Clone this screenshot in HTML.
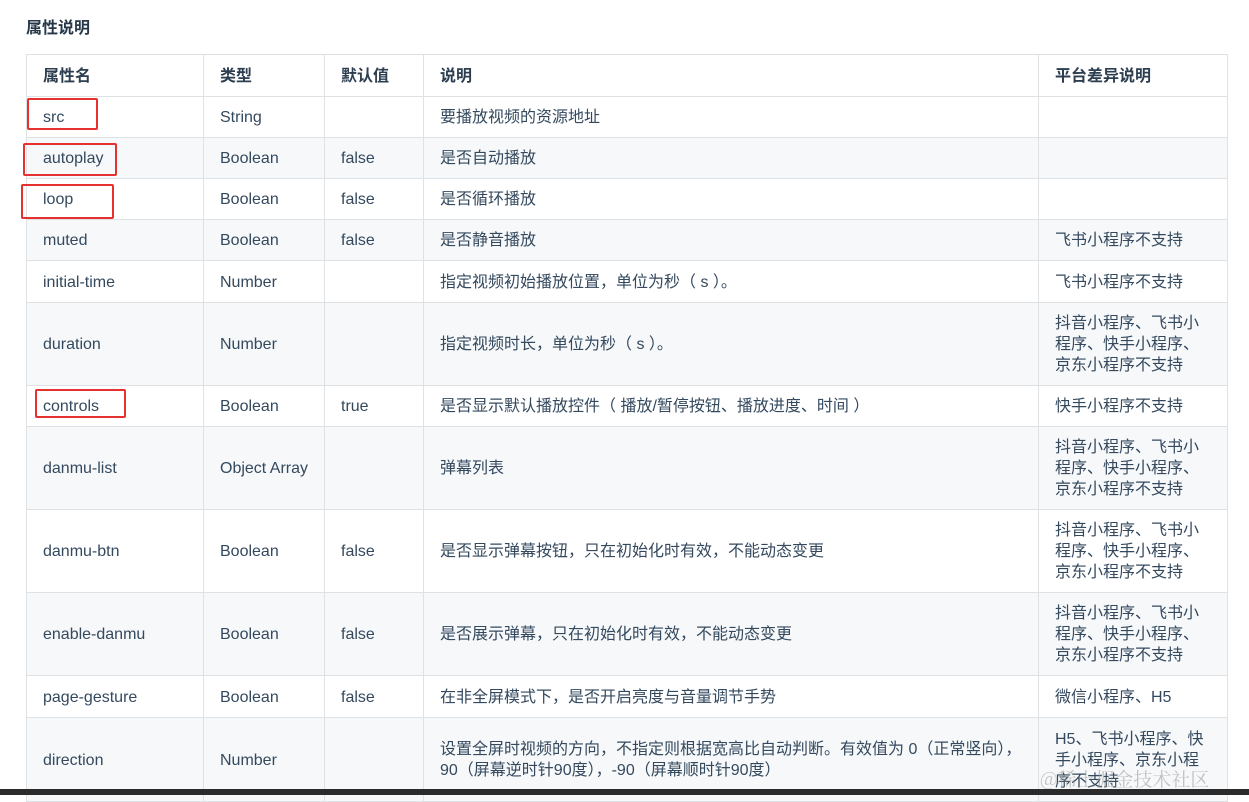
<!DOCTYPE html>
<html><head><meta charset="utf-8"><style>
body{margin:0;width:1249px;height:795px;overflow:hidden;background:#fff;font-family:"Liberation Sans","Noto Sans CJK SC",sans-serif;color:#2c3e50;position:relative}
h3{position:absolute;left:26px;top:14px;margin:0;font-size:16px;font-weight:bold;color:#273849}
table{position:absolute;left:26px;top:54px;width:1201px;border-collapse:collapse;font-size:16px;table-layout:fixed}
td,th{border:1px solid #dfe2e5;padding:1px 16px 0 16px;line-height:21px;text-align:left;vertical-align:middle;color:#34495e}
th{font-weight:bold;color:#2c3e50}
tr:nth-child(odd) td{background:#f6f8fa}
.nw{white-space:nowrap}
.r{position:absolute;border:2px solid #e5312f;border-radius:2px}
.bar{position:absolute;left:0;top:789px;width:1249px;height:6px;background:#2b2b2b}
.wm{position:absolute;left:1040px;top:765px;font-size:19px;color:rgba(150,150,150,.55);font-family:"Noto Serif CJK SC",serif}
</style></head><body>
<h3>属性说明</h3>
<table>
<colgroup><col style="width:177px"><col style="width:121px"><col style="width:99px"><col style="width:615px"><col style="width:189px"></colgroup>
<tr style="height:42px"><th>属性名</th><th>类型</th><th>默认值</th><th>说明</th><th>平台差异说明</th></tr>
<tr style="height:41px"><td>src</td><td>String</td><td></td><td>要播放视频的资源地址</td><td></td></tr>
<tr style="height:41px"><td>autoplay</td><td>Boolean</td><td>false</td><td>是否自动播放</td><td></td></tr>
<tr style="height:41px"><td>loop</td><td>Boolean</td><td>false</td><td>是否循环播放</td><td></td></tr>
<tr style="height:41px"><td>muted</td><td>Boolean</td><td>false</td><td>是否静音播放</td><td>飞书小程序不支持</td></tr>
<tr style="height:42px"><td>initial-time</td><td>Number</td><td></td><td>指定视频初始播放位置，单位为秒（ s ）。</td><td>飞书小程序不支持</td></tr>
<tr style="height:83px"><td>duration</td><td>Number</td><td></td><td>指定视频时长，单位为秒（ s ）。</td><td>抖音小程序、飞书小程序、快手小程序、京东小程序不支持</td></tr>
<tr style="height:41px"><td>controls</td><td>Boolean</td><td>true</td><td>是否显示默认播放控件（ 播放/暂停按钮、播放进度、时间 ）</td><td>快手小程序不支持</td></tr>
<tr style="height:83px"><td>danmu-list</td><td class="nw">Object Array</td><td></td><td>弹幕列表</td><td>抖音小程序、飞书小程序、快手小程序、京东小程序不支持</td></tr>
<tr style="height:83px"><td>danmu-btn</td><td>Boolean</td><td>false</td><td>是否显示弹幕按钮，只在初始化时有效，不能动态变更</td><td>抖音小程序、飞书小程序、快手小程序、京东小程序不支持</td></tr>
<tr style="height:83px"><td>enable-danmu</td><td>Boolean</td><td>false</td><td>是否展示弹幕，只在初始化时有效，不能动态变更</td><td>抖音小程序、飞书小程序、快手小程序、京东小程序不支持</td></tr>
<tr style="height:42px"><td>page-gesture</td><td>Boolean</td><td>false</td><td>在非全屏模式下，是否开启亮度与音量调节手势</td><td>微信小程序、H5</td></tr>
<tr style="height:84px"><td>direction</td><td>Number</td><td></td><td class="nw">设置全屏时视频的方向，不指定则根据宽高比自动判断。有效值为 0（正常竖向），<br>90（屏幕逆时针90度），-90（屏幕顺时针90度）</td><td>H5、飞书小程序、快手小程序、京东小程序不支持</td></tr>
</table>
<div class="r" style="left:27px;top:98px;width:67px;height:28px"></div>
<div class="r" style="left:23px;top:143px;width:90px;height:29px"></div>
<div class="r" style="left:21px;top:184px;width:89px;height:31px"></div>
<div class="r" style="left:35px;top:389px;width:87px;height:25px"></div>
<div class="wm">@稀土掘金技术社区</div>
<div class="bar"></div>
</body></html>
